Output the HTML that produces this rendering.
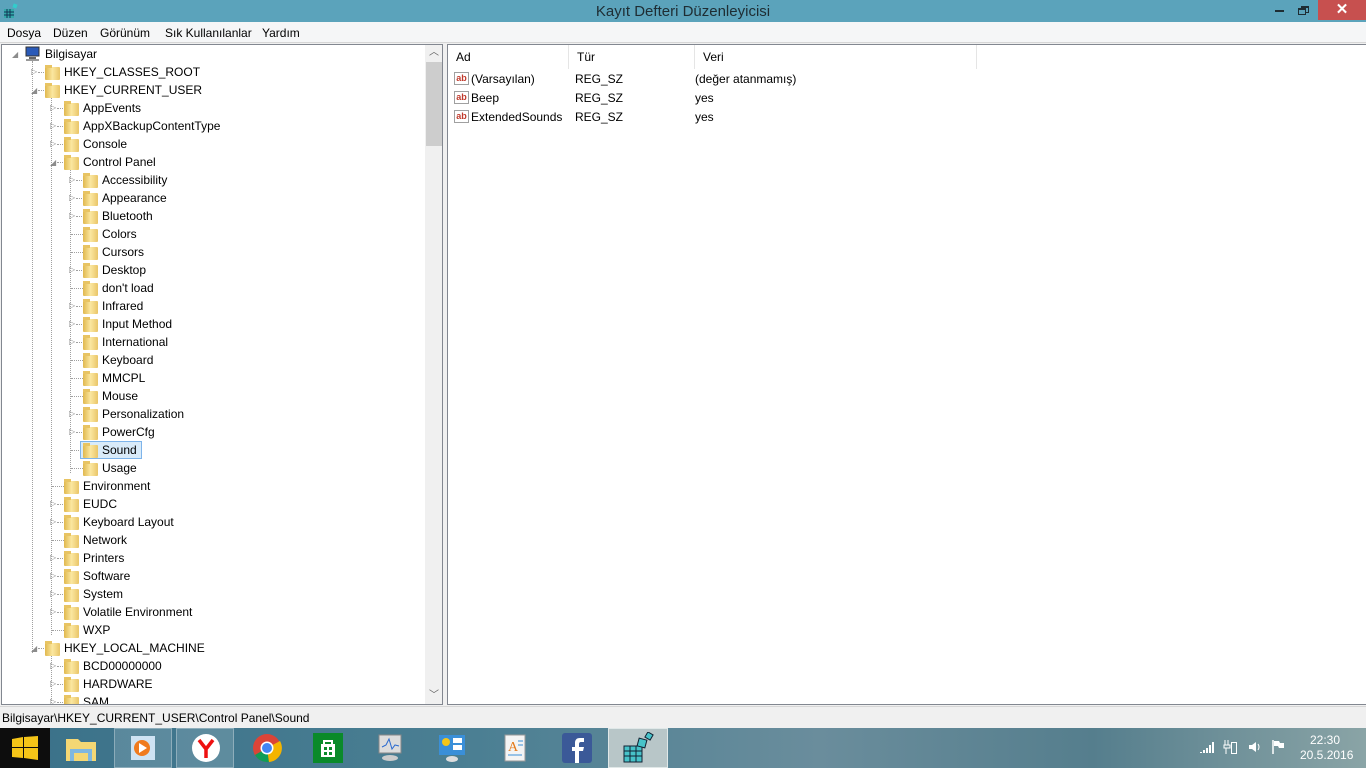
<!DOCTYPE html>
<html><head><meta charset="utf-8"><style>
*{margin:0;padding:0;box-sizing:border-box}
body{width:1366px;height:768px;overflow:hidden;position:relative;background:#f0f0f0;font-family:"Liberation Sans",sans-serif;font-size:12px;color:#000}
.a{position:absolute}
#title{left:0;top:0;width:1366px;height:22px;background:#5ba3bb}
#title .t{left:0;width:1366px;text-align:center;top:3px;font-size:15px;color:#1e2d33}
#menu{left:0;top:22px;width:1366px;height:21px;background:#f5f6f7;border-bottom:1px solid #d6d6d6}
#menu span{position:absolute;top:4px;font-size:12px}
#tree{left:1px;top:44px;width:442px;height:661px;background:#fff;border:1px solid #828790;overflow:hidden}
#list{left:447px;top:44px;width:919px;height:661px;background:#fff;border:1px solid #828790;border-right:none}
.r{position:absolute;height:18px;line-height:18px;white-space:nowrap;font-size:12px}
.f{position:absolute;width:15px;height:13px;background:linear-gradient(90deg,#e0b84e,#fbe7a0 50%,#e9c568);border-radius:1px}
.f:before{content:"";position:absolute;left:0;top:-2px;width:7px;height:3px;background:#e8c463}
.e{position:absolute;font-size:8px;color:#8c8c8c;line-height:10px}
.vd{position:absolute;border-left:1px dotted #a0a0a0;width:0}
.hd{position:absolute;border-top:1px dotted #a0a0a0;height:0;width:8px}
.hdr{position:absolute;top:0;height:24px;line-height:24px;font-size:12px;border-right:1px solid #e5e5e5;padding-left:8px}
.ab{position:absolute;width:15px;height:13px;border:1px solid #a0a0a0;background:#fff;font-size:9px;font-weight:bold;color:#c0392b;line-height:11px;text-align:center}
#status{left:0;top:706px;width:1366px;height:22px;background:#f0f0f0;border-top:1px solid #d6d6d6}
#task{left:0;top:728px;width:1366px;height:40px;background:linear-gradient(90deg,#3a7189 0%,#4b7f93 35%,#6a8d9c 60%,#557e8d 80%,#8aa4a6 100%)}
.tb{position:absolute;top:0;height:40px;width:58px}
</style></head><body>
<div id="title" class="a">
<svg class="a" style="left:3px;top:3px" width="16" height="16"><rect x="1" y="6" width="10" height="9" fill="#3aa"/><path d="M1 9h10M1 12h10M4 6v9M7 6v9" stroke="#135" stroke-width="1"/><rect x="10" y="1" width="4" height="4" fill="#3cc" transform="rotate(20 12 3)"/></svg>
<div class="a t">Kayıt Defteri Düzenleyicisi</div>
<div class="a" style="left:1275px;top:10px;width:9px;height:2px;background:#1e2d33"></div>
<div class="a" style="left:1301px;top:6px;width:8px;height:7px;border:1px solid #1e2d33;border-top-width:2px"></div>
<div class="a" style="left:1298px;top:8px;width:8px;height:7px;border:1px solid #1e2d33;border-top-width:2px;background:#5ba3bb"></div>
<div class="a" style="left:1318px;top:0;width:48px;height:20px;background:#c7504f;color:#fff;text-align:center;font-size:15px;line-height:19px;font-weight:bold">✕</div>
</div>
<div id="menu" class="a"><span style="left:7px">Dosya</span><span style="left:53px">Düzen</span><span style="left:100px">Görünüm</span><span style="left:165px">Sık Kullanılanlar</span><span style="left:262px">Yardım</span></div>

<div id="tree" class="a">
<!-- dotted vertical lines -->
<div class="vd" style="left:30px;top:16px;height:592px"></div>
<div class="vd" style="left:49px;top:52px;height:538px"></div>
<div class="vd" style="left:68px;top:124px;height:304px"></div>
<div class="vd" style="left:49px;top:610px;height:60px"></div>
<!-- Row 0 -->
<div class="e" style="left:10px;top:5px">◢</div>
<svg class="a" style="left:22px;top:1px" width="18" height="16"><rect x="2" y="1" width="13" height="9" fill="#2a5ab8" stroke="#333"/><rect x="5" y="11" width="7" height="2" fill="#666"/><rect x="2" y="13" width="13" height="2" fill="#999"/></svg>
<div class="r" style="left:43px;top:0">Bilgisayar</div>
<!-- rows generated statically -->
<div class="e" style="left:29px;top:22px">▷</div><div class="hd" style="left:36px;top:27px"></div><div class="f" style="left:43px;top:22px"></div><div class="r" style="left:62px;top:18px">HKEY_CLASSES_ROOT</div>
<div class="e" style="left:29px;top:41px">◢</div><div class="hd" style="left:36px;top:45px"></div><div class="f" style="left:43px;top:40px"></div><div class="r" style="left:62px;top:36px">HKEY_CURRENT_USER</div>

<div class="e" style="left:48px;top:58px">▷</div><div class="hd" style="left:55px;top:63px"></div><div class="f" style="left:62px;top:58px"></div><div class="r" style="left:81px;top:54px">AppEvents</div>
<div class="e" style="left:48px;top:76px">▷</div><div class="hd" style="left:55px;top:81px"></div><div class="f" style="left:62px;top:76px"></div><div class="r" style="left:81px;top:72px">AppXBackupContentType</div>
<div class="e" style="left:48px;top:94px">▷</div><div class="hd" style="left:55px;top:99px"></div><div class="f" style="left:62px;top:94px"></div><div class="r" style="left:81px;top:90px">Console</div>
<div class="e" style="left:48px;top:113px">◢</div><div class="hd" style="left:55px;top:117px"></div><div class="f" style="left:62px;top:112px"></div><div class="r" style="left:81px;top:108px">Control Panel</div>

<div class="e" style="left:67px;top:130px">▷</div><div class="hd" style="left:74px;top:135px"></div><div class="f" style="left:81px;top:130px"></div><div class="r" style="left:100px;top:126px">Accessibility</div>
<div class="e" style="left:67px;top:148px">▷</div><div class="hd" style="left:74px;top:153px"></div><div class="f" style="left:81px;top:148px"></div><div class="r" style="left:100px;top:144px">Appearance</div>
<div class="e" style="left:67px;top:166px">▷</div><div class="hd" style="left:74px;top:171px"></div><div class="f" style="left:81px;top:166px"></div><div class="r" style="left:100px;top:162px">Bluetooth</div>
<div class="hd" style="left:69px;top:189px;width:12px"></div><div class="f" style="left:81px;top:184px"></div><div class="r" style="left:100px;top:180px">Colors</div>
<div class="hd" style="left:69px;top:207px;width:12px"></div><div class="f" style="left:81px;top:202px"></div><div class="r" style="left:100px;top:198px">Cursors</div>
<div class="e" style="left:67px;top:220px">▷</div><div class="hd" style="left:74px;top:225px"></div><div class="f" style="left:81px;top:220px"></div><div class="r" style="left:100px;top:216px">Desktop</div>
<div class="hd" style="left:69px;top:243px;width:12px"></div><div class="f" style="left:81px;top:238px"></div><div class="r" style="left:100px;top:234px">don't load</div>
<div class="e" style="left:67px;top:256px">▷</div><div class="hd" style="left:74px;top:261px"></div><div class="f" style="left:81px;top:256px"></div><div class="r" style="left:100px;top:252px">Infrared</div>
<div class="e" style="left:67px;top:274px">▷</div><div class="hd" style="left:74px;top:279px"></div><div class="f" style="left:81px;top:274px"></div><div class="r" style="left:100px;top:270px">Input Method</div>
<div class="e" style="left:67px;top:292px">▷</div><div class="hd" style="left:74px;top:297px"></div><div class="f" style="left:81px;top:292px"></div><div class="r" style="left:100px;top:288px">International</div>
<div class="hd" style="left:69px;top:315px;width:12px"></div><div class="f" style="left:81px;top:310px"></div><div class="r" style="left:100px;top:306px">Keyboard</div>
<div class="hd" style="left:69px;top:333px;width:12px"></div><div class="f" style="left:81px;top:328px"></div><div class="r" style="left:100px;top:324px">MMCPL</div>
<div class="hd" style="left:69px;top:351px;width:12px"></div><div class="f" style="left:81px;top:346px"></div><div class="r" style="left:100px;top:342px">Mouse</div>
<div class="e" style="left:67px;top:364px">▷</div><div class="hd" style="left:74px;top:369px"></div><div class="f" style="left:81px;top:364px"></div><div class="r" style="left:100px;top:360px">Personalization</div>
<div class="e" style="left:67px;top:382px">▷</div><div class="hd" style="left:74px;top:387px"></div><div class="f" style="left:81px;top:382px"></div><div class="r" style="left:100px;top:378px">PowerCfg</div>
<div class="hd" style="left:69px;top:405px;width:12px"></div><div class="a" style="left:78px;top:396px;width:62px;height:18px;background:#d9ebf9;border:1px solid #7eb4ea"></div><div class="f" style="left:81px;top:400px"></div><div class="r" style="left:100px;top:396px">Sound</div>
<div class="hd" style="left:69px;top:423px;width:12px"></div><div class="f" style="left:81px;top:418px"></div><div class="r" style="left:100px;top:414px">Usage</div>

<div class="hd" style="left:50px;top:441px;width:12px"></div><div class="f" style="left:62px;top:436px"></div><div class="r" style="left:81px;top:432px">Environment</div>
<div class="e" style="left:48px;top:454px">▷</div><div class="hd" style="left:55px;top:459px"></div><div class="f" style="left:62px;top:454px"></div><div class="r" style="left:81px;top:450px">EUDC</div>
<div class="e" style="left:48px;top:472px">▷</div><div class="hd" style="left:55px;top:477px"></div><div class="f" style="left:62px;top:472px"></div><div class="r" style="left:81px;top:468px">Keyboard Layout</div>
<div class="hd" style="left:50px;top:495px;width:12px"></div><div class="f" style="left:62px;top:490px"></div><div class="r" style="left:81px;top:486px">Network</div>
<div class="e" style="left:48px;top:508px">▷</div><div class="hd" style="left:55px;top:513px"></div><div class="f" style="left:62px;top:508px"></div><div class="r" style="left:81px;top:504px">Printers</div>
<div class="e" style="left:48px;top:526px">▷</div><div class="hd" style="left:55px;top:531px"></div><div class="f" style="left:62px;top:526px"></div><div class="r" style="left:81px;top:522px">Software</div>
<div class="e" style="left:48px;top:544px">▷</div><div class="hd" style="left:55px;top:549px"></div><div class="f" style="left:62px;top:544px"></div><div class="r" style="left:81px;top:540px">System</div>
<div class="e" style="left:48px;top:562px">▷</div><div class="hd" style="left:55px;top:567px"></div><div class="f" style="left:62px;top:562px"></div><div class="r" style="left:81px;top:558px">Volatile Environment</div>
<div class="hd" style="left:50px;top:585px;width:12px"></div><div class="f" style="left:62px;top:580px"></div><div class="r" style="left:81px;top:576px">WXP</div>

<div class="e" style="left:29px;top:599px">◢</div><div class="hd" style="left:36px;top:603px"></div><div class="f" style="left:43px;top:598px"></div><div class="r" style="left:62px;top:594px">HKEY_LOCAL_MACHINE</div>
<div class="e" style="left:48px;top:616px">▷</div><div class="hd" style="left:55px;top:621px"></div><div class="f" style="left:62px;top:616px"></div><div class="r" style="left:81px;top:612px">BCD00000000</div>
<div class="e" style="left:48px;top:634px">▷</div><div class="hd" style="left:55px;top:639px"></div><div class="f" style="left:62px;top:634px"></div><div class="r" style="left:81px;top:630px">HARDWARE</div>
<div class="e" style="left:48px;top:652px">▷</div><div class="hd" style="left:55px;top:657px"></div><div class="f" style="left:62px;top:652px"></div><div class="r" style="left:81px;top:648px">SAM</div>
<!-- scrollbar -->
<div class="a" style="left:423px;top:0;width:17px;height:661px;background:#f0f0f0"></div>
<div class="a" style="left:424px;top:0;width:16px;height:16px;text-align:center;font-size:10px;color:#606060;line-height:16px">︿</div>
<div class="a" style="left:424px;top:17px;width:16px;height:84px;background:#cdcdcd"></div>
<div class="a" style="left:424px;top:643px;width:16px;height:16px;text-align:center;font-size:10px;color:#606060;line-height:16px">﹀</div>
</div>

<div id="list" class="a">
<div class="hdr" style="left:0;width:121px">Ad</div>
<div class="hdr" style="left:121px;width:126px">Tür</div>
<div class="hdr" style="left:247px;width:282px">Veri</div>
<div class="ab" style="left:6px;top:27px">ab</div><div class="r" style="left:23px;top:25px">(Varsayılan)</div><div class="r" style="left:127px;top:25px">REG_SZ</div><div class="r" style="left:247px;top:25px">(değer atanmamış)</div>
<div class="ab" style="left:6px;top:46px">ab</div><div class="r" style="left:23px;top:44px">Beep</div><div class="r" style="left:127px;top:44px">REG_SZ</div><div class="r" style="left:247px;top:44px">yes</div>
<div class="ab" style="left:6px;top:65px">ab</div><div class="r" style="left:23px;top:63px">ExtendedSounds</div><div class="r" style="left:127px;top:63px">REG_SZ</div><div class="r" style="left:247px;top:63px">yes</div>
</div>

<div id="status" class="a"><div class="r" style="left:2px;top:2px">Bilgisayar\HKEY_CURRENT_USER\Control Panel\Sound</div></div>

<div id="task" class="a">
<div class="tb" style="left:0;width:50px;background:#0d0d0d"></div>
<svg class="a" style="left:12px;top:8px" width="26" height="24"><path d="M0 3l11-2v10H0zM12 1l14-1v11H12zM0 12h11v10L0 21zM12 12h14v12l-14-2z" fill="#f5c518"/></svg>
<svg class="a" style="left:64px;top:5px" width="34" height="30"><path d="M2 6h12l3 3h15v19H2z" fill="#f4d774"/><rect x="6" y="16" width="22" height="12" fill="#7fb7e0"/><rect x="10" y="20" width="14" height="8" fill="#f4d774"/></svg>
<div class="tb" style="left:114px;width:58px;background:rgba(255,255,255,.15);border:1px solid rgba(255,255,255,.3)"></div>
<svg class="a" style="left:128px;top:6px" width="30" height="28"><rect x="3" y="2" width="24" height="24" fill="#cfe3f3"/><circle cx="14" cy="14" r="8" fill="#f07b1e"/><path d="M11 9l8 5-8 5z" fill="#fff"/></svg>
<div class="tb" style="left:176px;width:58px;background:rgba(255,255,255,.15);border:1px solid rgba(255,255,255,.3)"></div>
<svg class="a" style="left:191px;top:5px" width="30" height="30"><circle cx="15" cy="15" r="14" fill="#fff"/><path d="M8 7l7 9 7-9M15 16v9" stroke="#e11" stroke-width="3.5" fill="none"/></svg>
<svg class="a" style="left:252px;top:5px" width="30" height="30"><circle cx="15" cy="15" r="14" fill="#db4437"/><path d="M15 15L3 22A14 14 0 0 0 17 29z" fill="#0f9d58"/><path d="M15 15L17 29A14 14 0 0 0 28 8z" fill="#f4b400"/><circle cx="15" cy="15" r="6.5" fill="#fff"/><circle cx="15" cy="15" r="5" fill="#4285f4"/></svg>
<svg class="a" style="left:313px;top:5px" width="30" height="30"><rect width="30" height="30" fill="#0a8a2a"/><path d="M8 11h14v13H8z" fill="#fff"/><path d="M11 11V8h8v3" stroke="#fff" fill="none" stroke-width="2"/><path d="M11 14h3v3h-3zM16 14h3v3h-3zM11 19h3v3h-3zM16 19h3v3h-3z" fill="#0a8a2a"/></svg>
<svg class="a" style="left:375px;top:5px" width="30" height="30"><rect x="4" y="2" width="22" height="18" fill="#ddd" stroke="#888"/><path d="M7 14l4-2 3-6 3 10 3-4 4 1" stroke="#2a6ad0" fill="none"/><ellipse cx="15" cy="25" rx="8" ry="3" fill="#ccc"/></svg>
<svg class="a" style="left:437px;top:5px" width="30" height="30"><rect x="2" y="2" width="26" height="20" fill="#3a8fd8"/><rect x="16" y="5" width="9" height="5" fill="#fff"/><rect x="16" y="12" width="9" height="5" fill="#fff"/><circle cx="9" cy="9" r="4" fill="#f5c518"/><ellipse cx="15" cy="26" rx="6" ry="3" fill="#ddd"/></svg>
<svg class="a" style="left:500px;top:5px" width="30" height="30"><rect x="5" y="2" width="20" height="26" fill="#f4f4f4" stroke="#999"/><text x="8" y="18" font-size="14" fill="#e47a1a" font-family="Liberation Serif">A</text><path d="M18 8h5M18 12h5M8 22h14" stroke="#3a8fd8"/></svg>
<svg class="a" style="left:562px;top:5px" width="30" height="30"><rect width="30" height="30" rx="3" fill="#3b5998"/><path d="M17 30V18h4l1-4h-5v-3c0-1 .5-2 2-2h3V5h-4c-4 0-5 2.5-5 5v4h-3v4h3v12z" fill="#fff"/></svg>
<div class="tb" style="left:608px;width:60px;background:#b8c6c8;border:1px solid #e0e8e8"></div>
<svg class="a" style="left:621px;top:4px" width="34" height="32"><rect x="3" y="14" width="18" height="16" fill="#47c3c9" stroke="#123"/><path d="M3 19h18M3 24h18M9 14v16M15 14v16" stroke="#123"/><rect x="17" y="7" width="8" height="8" fill="#47c3c9" stroke="#123" transform="rotate(15 21 11)"/><rect x="25" y="1" width="6" height="6" fill="#47c3c9" stroke="#123" transform="rotate(30 28 4)"/></svg>
<svg class="a" style="left:1199px;top:13px" width="16" height="12"><path d="M1 11h2v1H1zM4 9h2v3H4zM7 7h2v5H7zM10 4h2v8h-2zM13 1h2v11h-2z" fill="#fff"/></svg>
<svg class="a" style="left:1223px;top:11px" width="14" height="16"><path d="M2 1v5M5 1v5M1 6h6v3H1zM3 9v6" stroke="#fff" fill="none"/><rect x="8.5" y="3.5" width="5" height="11" stroke="#fff" fill="none"/></svg>
<svg class="a" style="left:1248px;top:12px" width="14" height="14"><path d="M1 5h3l4-3v10l-4-3H1z" fill="#fff"/><path d="M10 4q2 3 0 6" stroke="#fff" fill="none"/></svg>
<svg class="a" style="left:1271px;top:11px" width="14" height="16"><path d="M2 1v14" stroke="#fff" stroke-width="1.5"/><path d="M3 2h5l1 2h4v5H8l-1-2H3z" fill="#fff"/></svg>
<div class="a" style="left:1300px;top:5px;width:50px;text-align:center;color:#fff;font-size:12px;line-height:15px">22:30<br>20.5.2016</div>
</div>
</body></html>
